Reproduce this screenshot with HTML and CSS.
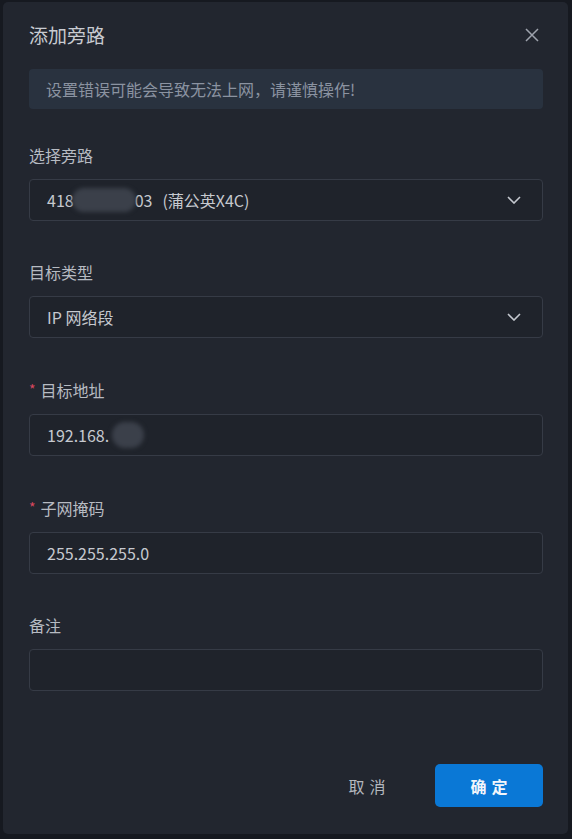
FILE: index.html
```html
<!DOCTYPE html>
<html lang="zh-CN">
<head>
    <meta charset="UTF-8">
    <meta name="viewport" content="width=device-width, initial-scale=1.0">
    <title>添加旁路</title>
    <link rel="stylesheet" href="styles.css">
</head>
<body>
    <div class="dialog">
        <div class="dialog-header">
            <div class="dialog-title">添加旁路</div>
            <button class="close-btn" aria-label="关闭">
                <svg width="14" height="14" viewBox="0 0 14 14">
                    <path d="M1 1 L13 13 M13 1 L1 13" stroke="#9ea3ad" stroke-width="1.5" fill="none"/>
                </svg>
            </button>
        </div>

        <div class="alert">设置错误可能会导致无法上网，请谨慎操作!</div>

        <div class="form">
            <div class="form-item">
                <label class="form-label">选择旁路</label>
                <div class="select">
                    <span class="select-value">418<span class="mask mask-wide"></span>03<span class="model">(蒲公英X4C)</span></span>
                    <svg class="chevron" width="14" height="8" viewBox="0 0 14 8">
                        <polyline points="1,1 7,7 13,1" stroke="#c4c8cf" stroke-width="1.6" fill="none"/>
                    </svg>
                </div>
            </div>

            <div class="form-item">
                <label class="form-label">目标类型</label>
                <div class="select">
                    <span class="select-value">IP 网络段</span>
                    <svg class="chevron" width="14" height="8" viewBox="0 0 14 8">
                        <polyline points="1,1 7,7 13,1" stroke="#c4c8cf" stroke-width="1.6" fill="none"/>
                    </svg>
                </div>
            </div>

            <div class="form-item">
                <label class="form-label required">目标地址</label>
                <div class="input">192.168.<span class="mask mask-round"></span></div>
            </div>

            <div class="form-item">
                <label class="form-label required">子网掩码</label>
                <div class="input">255.255.255.0</div>
            </div>

            <div class="form-item">
                <label class="form-label">备注</label>
                <div class="input"></div>
            </div>
        </div>

        <div class="dialog-footer">
            <button class="btn btn-text">取消</button>
            <button class="btn btn-primary">确定</button>
        </div>
    </div>
</body>
</html>
```

FILE: styles.css
```css
html, body {
    height: 100%;
}
body {
    margin: 0;
    padding: 2px 4px 5px 3px;
    box-sizing: border-box;
    background-color: #161920;
    font-family: "Noto Sans CJK SC", "Noto Sans", sans-serif;
}
.dialog {
    height: 100%;
    box-sizing: border-box;
    background-color: #22262f;
    border-radius: 5px;
    padding: 21px 25px 27px 26px;
    display: flex;
    flex-direction: column;
}
.dialog-header {
    display: flex;
    align-items: center;
    justify-content: space-between;
    height: 24px;
}
.dialog-title {
    font-size: 19px;
    line-height: 24px;
    color: #c8cbd1;
}
.close-btn {
    background: none;
    border: none;
    padding: 0;
    margin-right: 4px;
    width: 14px;
    height: 14px;
    display: flex;
    cursor: pointer;
}
.alert {
    margin-top: 22px;
    height: 40px;
    line-height: 40px;
    padding: 0 17px;
    border-radius: 4px;
    background-color: #29323f;
    color: #8b93a1;
    font-size: 16px;
}
.form {
    margin-top: 36px;
    display: flex;
    flex-direction: column;
    gap: 41px;
}
.form-item {
    display: flex;
    flex-direction: column;
    gap: 14px;
}
.form-label {
    font-size: 16px;
    line-height: 20px;
    color: #b7bbc2;
}
.required::before {
    content: "*";
    color: #d9475f;
    margin-right: 5px;
    font-size: 14px;
    vertical-align: 2px;
}
.select,
.input {
    height: 42px;
    box-sizing: border-box;
    border: 1px solid #363b46;
    border-radius: 4px;
    background-color: #1f232b;
    padding: 0 17px;
    display: flex;
    align-items: center;
    font-size: 16px;
    color: #c6c9cf;
    white-space: nowrap;
}
.select {
    justify-content: space-between;
}
.select-value {
    display: flex;
    align-items: center;
}
.model {
    margin-left: 10px;
}
.chevron {
    margin-right: 4px;
}
.mask {
    display: inline-block;
    background-color: #3b404a;
    filter: blur(2px);
}
.mask-wide {
    width: 64px;
    height: 24px;
    border-radius: 12px;
    margin: 0 -1px 0 -2px;
}
.mask-round {
    width: 32px;
    height: 26px;
    border-radius: 13px;
    margin-left: 3px;
}
.dialog-footer {
    margin-top: auto;
    display: flex;
    justify-content: flex-end;
    gap: 14px;
}
.btn {
    height: 43px;
    width: 108px;
    border: none;
    border-radius: 5px;
    font-family: "Noto Sans CJK SC", sans-serif;
    font-size: 16px;
    letter-spacing: 5px;
    text-indent: 5px;
    cursor: pointer;
}
.btn-text {
    background: none;
    color: #b3b7be;
}
.btn-primary {
    background-color: #0a78d6;
    color: #f2f6fb;
    font-weight: bold;
}
```
